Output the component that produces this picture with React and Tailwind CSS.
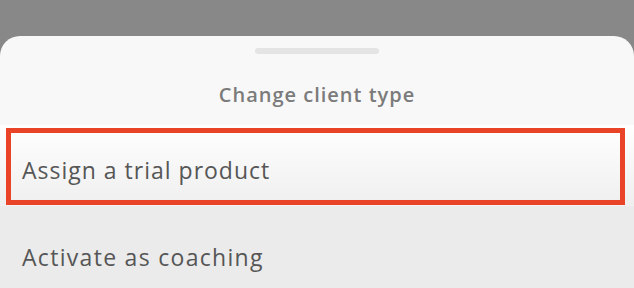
import React from 'react';

const font = { fontFamily: '"Open Sans", "Noto Sans", sans-serif' };

export default function App() {
  return (
    <div className="w-[634px] h-[288px] overflow-hidden bg-[#888888] pt-[36px]" style={font}>
      <div className="h-full rounded-t-[20px] bg-[#f8f8f8] flex flex-col">
        <div className="mx-auto mt-[12px] w-[124px] h-[6px] rounded-full bg-[#e4e4e4]" />

        <div className="mt-[27px] text-center text-[20px] leading-[28px] tracking-[1px] font-semibold text-[#7b7b7b]">
          Change client type
        </div>

        <div className="mt-[16px] relative h-[80px] bg-gradient-to-b from-white to-[#efefef] pl-[22px] pt-[31px]">
          <span className="text-[23px] leading-[28px] tracking-[1px] text-[#565656]">Assign a trial product</span>
          <div className="absolute left-[6px] right-[9px] top-[3px] bottom-0 border-[5px] border-[#ea4428]" />
        </div>

        <div className="flex-1 bg-[#ebebeb] border-t border-[#f2f2f2] pl-[22px] pt-[37px]">
          <span className="text-[23px] leading-[28px] tracking-[1.3px] text-[#565656]">Activate as coaching</span>
        </div>
      </div>
    </div>
  );
}
